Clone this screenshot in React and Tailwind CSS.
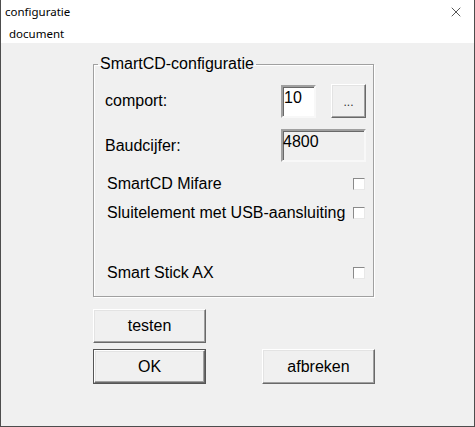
import { X } from 'lucide-react';

const raised =
  'border border-t-white border-l-white border-r-[#696969] border-b-[#696969] shadow-[inset_-1px_-1px_0_#a0a0a0,inset_1px_1px_0_#e3e3e3] bg-[#f0f0f0]';
const sunken =
  'border-2 border-t-[#a0a0a0] border-l-[#a0a0a0] border-r-[#f8f8f8] border-b-[#f8f8f8] shadow-[inset_1px_1px_0_#696969]';

function Check() {
  return (
    <span className="w-[12px] h-[12px] border border-t-[#8a8a8a] border-l-[#8a8a8a] border-r-[#e8e8e8] border-b-[#e8e8e8] bg-white" />
  );
}

function CheckRow({ label, className }) {
  return (
    <div className={`flex items-center justify-between h-[20px] pl-[2px] pr-[1px] ${className}`}>
      <span>{label}</span>
      <Check />
    </div>
  );
}

export default function App() {
  return (
    <div className="w-[475px] h-[427px] flex flex-col bg-[#f0f0f0] border-l border-r border-b border-[#4d4d4d] text-[#000] font-['Liberation_Sans',Arial,sans-serif] text-[16px] leading-[18px] overflow-hidden">
      {/* titel + menu */}
      <div className="bg-white font-['Noto_Sans',sans-serif] text-[11.5px]">
        <div className="h-[24px] flex items-center justify-between pl-[4px] pr-[10px]">
          <span>configuratie</span>
          <X className="w-[16px] h-[16px]" strokeWidth={1} />
        </div>
        <div className="h-[19px] flex items-center pl-[8px]">
          <span>document</span>
        </div>
      </div>

      <div className="flex flex-col pl-[92px]">
        <fieldset className="mt-[12px] w-[281px] border border-[#a0a0a0] pl-[11px] pr-[7px] pb-[13px] shadow-[inset_1px_1px_0_#fff,1px_1px_0_#fff]">
          <legend className="ml-[-7px] px-[2px] leading-[18px]">SmartCD-configuratie</legend>

          <div className="mt-[11px] flex items-center h-[34px]">
            <span className="flex-1">comport:</span>
            <div className={`w-[35px] h-[33px] bg-white pl-[1px] pt-[2px] ${sunken}`}>10</div>
            <button className={`ml-[15px] w-[35px] h-[34px] flex items-end justify-center pb-[6px] text-[12px] text-[#333] ${raised}`}>
              ...
            </button>
          </div>

          <div className="mt-[11px] flex items-center h-[33px]">
            <span className="flex-1">Baudcijfer:</span>
            <div className={`w-[85px] h-[33px] bg-[#f0f0f0] pl-[0px] pt-[2px] ${sunken}`}>4800</div>
          </div>

          <CheckRow label="SmartCD Mifare" className="mt-[12px]" />
          <CheckRow label="Sluitelement met USB-aansluiting" className="mt-[9px]" />
          <CheckRow label="Smart Stick AX" className="mt-[40px]" />
        </fieldset>

        <button className={`mt-[12px] w-[113px] h-[34px] ${raised}`}>testen</button>

        <div className="mt-[6px] flex">
          <button className="w-[113px] h-[35px] border border-[#555] bg-[#f0f0f0]">
            <div className={`w-full h-full flex items-center justify-center ${raised}`}>OK</div>
          </button>
          <button className={`ml-[56px] w-[113px] h-[35px] ${raised}`}>afbreken</button>
        </div>
      </div>
    </div>
  );
}
